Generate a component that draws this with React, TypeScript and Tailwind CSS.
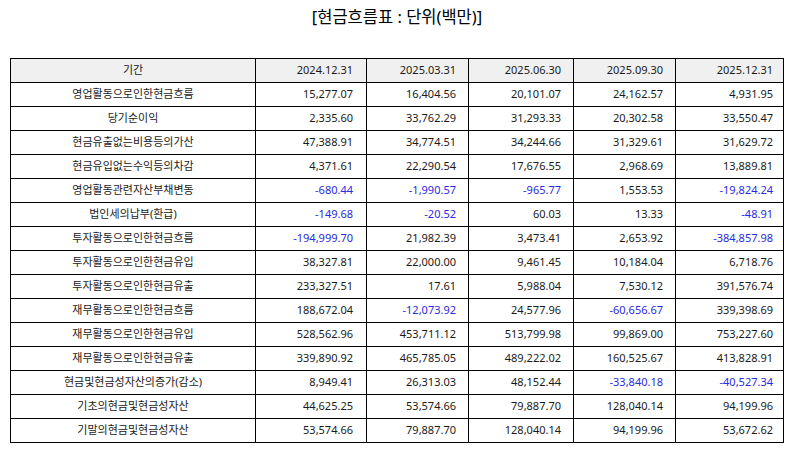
const cols = ["2024.12.31", "2025.03.31", "2025.06.30", "2025.09.30", "2025.12.31"];

const rows: [string, string[]][] = [
  ["영업활동으로인한현금흐름", ["15,277.07", "16,404.56", "20,101.07", "24,162.57", "4,931.95"]],
  ["당기순이익", ["2,335.60", "33,762.29", "31,293.33", "20,302.58", "33,550.47"]],
  ["현금유출없는비용등의가산", ["47,388.91", "34,774.51", "34,244.66", "31,329.61", "31,629.72"]],
  ["현금유입없는수익등의차감", ["4,371.61", "22,290.54", "17,676.55", "2,968.69", "13,889.81"]],
  ["영업활동관련자산부채변동", ["-680.44", "-1,990.57", "-965.77", "1,553.53", "-19,824.24"]],
  ["법인세의납부(환급)", ["-149.68", "-20.52", "60.03", "13.33", "-48.91"]],
  ["투자활동으로인한현금흐름", ["-194,999.70", "21,982.39", "3,473.41", "2,653.92", "-384,857.98"]],
  ["투자활동으로인한현금유입", ["38,327.81", "22,000.00", "9,461.45", "10,184.04", "6,718.76"]],
  ["투자활동으로인한현금유출", ["233,327.51", "17.61", "5,988.04", "7,530.12", "391,576.74"]],
  ["재무활동으로인한현금흐름", ["188,672.04", "-12,073.92", "24,577.96", "-60,656.67", "339,398.69"]],
  ["재무활동으로인한현금유입", ["528,562.96", "453,711.12", "513,799.98", "99,869.00", "753,227.60"]],
  ["재무활동으로인한현금유출", ["339,890.92", "465,785.05", "489,222.02", "160,525.67", "413,828.91"]],
  ["현금및현금성자산의증가(감소)", ["8,949.41", "26,313.03", "48,152.44", "-33,840.18", "-40,527.34"]],
  ["기초의현금및현금성자산", ["44,625.25", "53,574.66", "79,887.70", "128,040.14", "94,199.96"]],
  ["기말의현금및현금성자산", ["53,574.66", "79,887.70", "128,040.14", "94,199.96", "53,672.62"]],
];

const widths = ["w-[245px]", "w-[111px]", "w-[102px]", "w-[105px]", "w-[102px]", "w-[108px]"];
const pads = ["pr-[13px]", "pr-[12px]", "pr-[12px]", "pr-[12px]", "pr-[10px]"];

export default function App() {
  return (
    <div
      className="w-[794px] h-[452px] bg-white text-[#1a1a1a]"
      style={{ fontFamily: '"Noto Sans", "Noto Sans CJK KR", sans-serif' }}
    >
      <h1 className="pt-[5px] h-[58px] text-center text-[16.5px] leading-[24px] text-black">
        [현금흐름표 : 단위(백만)]
      </h1>
      <table className="ml-[10px] w-[773px] table-fixed border-collapse text-[11px]">
        <colgroup>
          {widths.map((w, i) => (
            <col key={i} className={w} />
          ))}
        </colgroup>
        <thead>
          <tr className="h-[24px] bg-[#f0f0f0]">
            <th className="border border-black p-0 text-center font-normal">기간</th>
            {cols.map((c, i) => (
              <th key={c} className={`border border-black p-0 text-right font-normal ${pads[i]}`}>
                {c}
              </th>
            ))}
          </tr>
        </thead>
        <tbody>
          {rows.map(([label, vals]) => (
            <tr key={label} className="h-[24px]">
              <td className="border border-black p-0 text-center">{label}</td>
              {vals.map((v, i) => (
                <td
                  key={i}
                  className={`border border-black p-0 text-right ${pads[i]} ${v.startsWith("-") ? "text-[#2a2ae0]" : ""}`}
                >
                  {v}
                </td>
              ))}
            </tr>
          ))}
        </tbody>
      </table>
    </div>
  );
}
